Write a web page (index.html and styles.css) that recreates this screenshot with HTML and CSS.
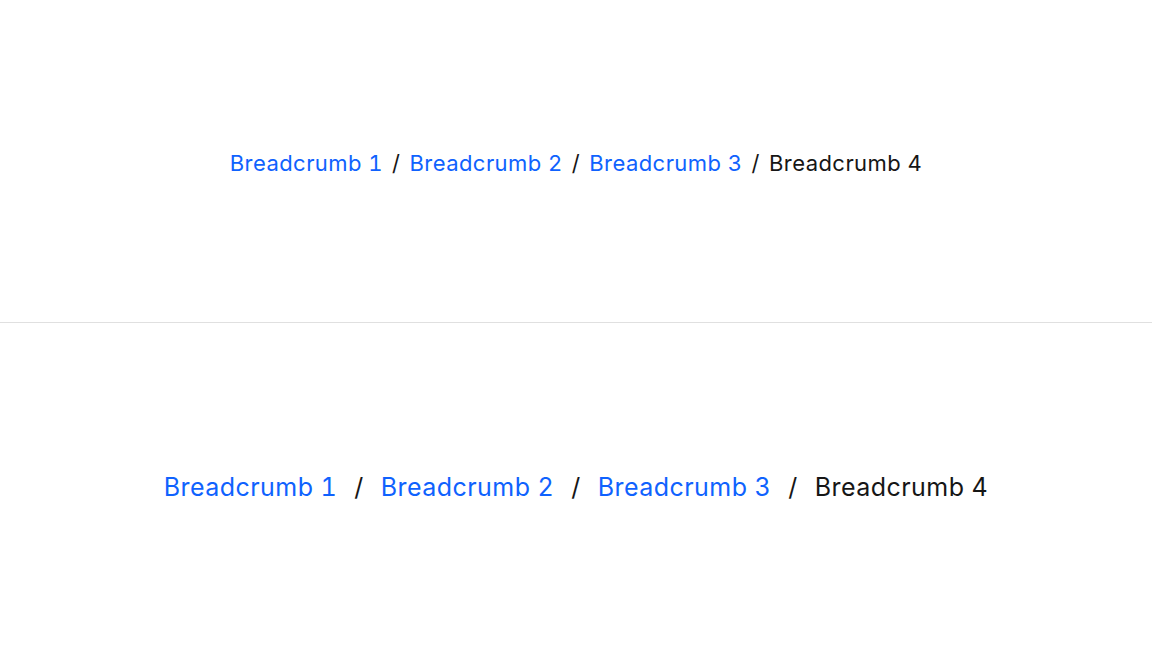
FILE: index.html
```html
<!DOCTYPE html>
<html lang="en">
<head>
<meta charset="utf-8">
<title>Breadcrumb</title>
<link rel="stylesheet" href="styles.css">
</head>
<body>
<section class="panel panel-top">
  <nav class="breadcrumb breadcrumb-sm" aria-label="Breadcrumb">
    <a class="crumb-link" href="#">Breadcrumb 1</a>
    <span class="sep">/</span>
    <a class="crumb-link" href="#">Breadcrumb 2</a>
    <span class="sep">/</span>
    <a class="crumb-link" href="#">Breadcrumb 3</a>
    <span class="sep">/</span>
    <span class="crumb-current">Breadcrumb 4</span>
  </nav>
</section>
<section class="panel panel-bottom">
  <nav class="breadcrumb breadcrumb-lg" aria-label="Breadcrumb">
    <a class="crumb-link" href="#">Breadcrumb 1</a>
    <span class="sep">/</span>
    <a class="crumb-link" href="#">Breadcrumb 2</a>
    <span class="sep">/</span>
    <a class="crumb-link" href="#">Breadcrumb 3</a>
    <span class="sep">/</span>
    <span class="crumb-current">Breadcrumb 4</span>
  </nav>
</section>
</body>
</html>
```
FILE: styles.css
```css
html, body {
  margin: 0;
  padding: 0;
  background: #ffffff;
}
body {
  font-family: Inter, "Noto Sans", "Liberation Sans", sans-serif;
  color: #161616;
  display: flex;
  flex-direction: column;
  height: 648px;
}
.panel {
  display: flex;
  align-items: center;
  justify-content: center;
}
.panel-top {
  height: 322px;
  border-bottom: 1px solid #e0e0e0;
}
.panel-bottom {
  flex: 1;
}
.breadcrumb {
  display: flex;
  align-items: center;
  white-space: nowrap;
  font-variant-numeric: tabular-nums;
}
.crumb-link {
  color: #0f62fe;
  text-decoration: none;
}
.crumb-current {
  color: #161616;
}
.sep {
  color: #161616;
}
.breadcrumb-sm {
  font-size: 22px;
  letter-spacing: 0.45px;
  gap: 9px;
  margin-top: 3px;
}
.breadcrumb-lg {
  font-size: 25px;
  letter-spacing: 0.45px;
  gap: 17px;
  margin-top: 3px;
}
```
